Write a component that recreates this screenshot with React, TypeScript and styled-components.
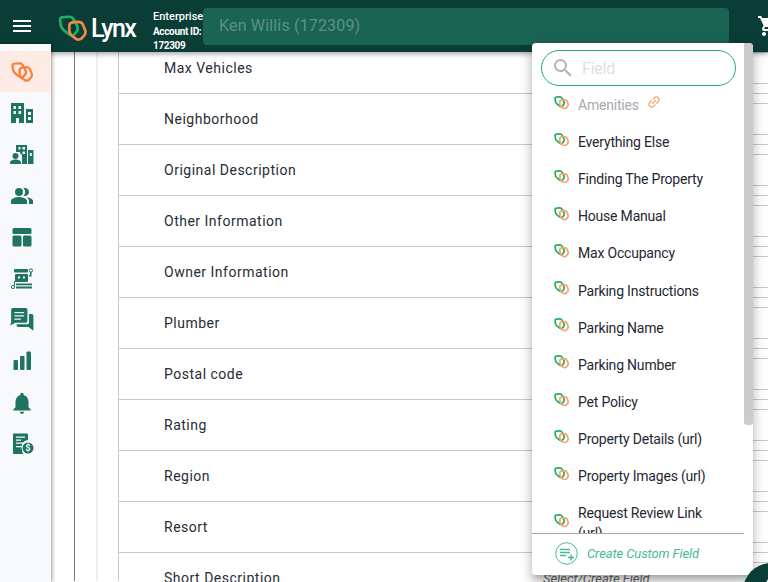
import React from "react";
import styled, { createGlobalStyle } from "styled-components";
import { MdMenu, MdSearch, MdShoppingCart, MdPeopleAlt, MdNotifications, MdLink } from "react-icons/md";

const Global = createGlobalStyle`
  html, body { margin: 0; padding: 0; background: #fff; }
  body { font-family: Roboto, "Liberation Sans", sans-serif; }
  * { box-sizing: border-box; }
`;

const Page = styled.div`
  position: relative;
  width: 768px;
  height: 582px;
  overflow: hidden;
  background: #fff;
`;

const Header = styled.header`
  position: relative;
  z-index: 1;
  height: 52px;
  background: #0b3d37;
  display: flex;
  align-items: center;
  box-shadow: 0 2px 5px rgba(0, 0, 0, 0.35);
  color: #fff;
`;

const MenuButton = styled.div`
  width: 44px;
  flex: none;
  padding-left: 10px;
  display: flex;
  align-items: center;
  color: #fff;
  margin-bottom: 1px;
`;

const Brand = styled.div`
  width: 95px;
  flex: none;
  margin-left: 14px;
  display: flex;
  align-items: center;
  gap: 4px;
  margin-top: 5px;
`;

const BrandName = styled.span`
  font-size: 25px;
  font-weight: 500;
  letter-spacing: -1.6px;
  color: #fff;
`;

const Account = styled.div`
  width: 50px;
  flex: none;
  font-size: 10px;
  font-weight: 700;
  line-height: 13px;
  white-space: nowrap;
  margin-top: 9px;
`;

const AccountPlan = styled.div`
  font-size: 11px;
  font-weight: 500;
  line-height: 16px;
`;

const AccountLine = styled.div`
  height: 14px;
  line-height: 14px;
  letter-spacing: -0.35px;
`;

const CustomerField = styled.div`
  position: relative;
  width: 526px;
  flex: none;
  height: 37px;
  border-radius: 4px;
  background: #1a6454;
  color: #5f9184;
  font-size: 16px;
  letter-spacing: 0.17px;
  display: flex;
  align-items: center;
  padding: 0 0 2px 16px;
`;

const CartButton = styled.div`
  flex: none;
  margin-left: 28px;
  display: flex;
`;

const Body = styled.div`
  display: flex;
  margin-top: -8px;
  height: 538px;
`;

const Sidebar = styled.nav`
  position: relative;
  z-index: 2;
  width: 51px;
  flex: none;
  padding-top: 7px;
  background: #f7f9fb;
  box-shadow: 1px 0 4px rgba(0, 0, 0, 0.4);
`;

const NavItem = styled.div<{ $active?: boolean }>`
  height: 41.4px;
  padding-right: 7px;
  display: flex;
  align-items: center;
  justify-content: center;
  color: #1f7361;
  background: ${(p) => (p.$active ? "#ffebe6" : "transparent")};
`;

const Main = styled.main`
  flex: 1;
  min-width: 0;
  overflow: hidden;
  padding-left: 23px;
`;

const OuterRail = styled.div`
  height: 100%;
  border-left: 1px solid #777;
  padding-left: 21px;
`;

const InnerRail = styled.div`
  height: 100%;
  border-left: 2px solid #eeeeee;
  padding-left: 20px;
`;

const RowList = styled.div`
  height: 100%;
  margin-top: -1.5px;
  border-left: 1px solid #c8c8c8;
`;

const Row = styled.div`
  height: 51.1px;
  display: flex;
  align-items: stretch;
  border-bottom: 1px solid #c8c8c8;
  white-space: nowrap;
`;

const RowLabel = styled.div`
  width: 424px;
  flex: none;
  padding: 16px 0 0 45px;
  font-size: 14px;
  line-height: 18px;
  letter-spacing: 0.5px;
  color: #262c36;
`;

const RowValue = styled.div`
  flex: 1;
  padding-top: 17px;
  font-size: 13px;
  line-height: 18px;
  font-style: italic;
  color: #666;
`;

const RowInputs = styled.div`
  width: 30px;
  margin: 9px 0;
  border-top: 1px solid #c8c8c8;
  border-bottom: 1px solid #c8c8c8;
  margin-left: auto;
`;

const Dropdown = styled.div`
  position: absolute;
  z-index: 3;
  left: 532px;
  top: 43px;
  width: 221px;
  height: 532px;
  display: flex;
  background: #fff;
  border-radius: 4px;
  overflow: hidden;
  box-shadow: 0 5px 5px -3px rgba(0, 0, 0, 0.2), 0 8px 10px 1px rgba(0, 0, 0, 0.14),
    0 3px 14px 2px rgba(0, 0, 0, 0.12);
`;

const DropdownBody = styled.div`
  flex: 1;
  min-width: 0;
  display: flex;
  flex-direction: column;
`;

const ScrollTrack = styled.div`
  width: 9px;
  flex: none;
`;

const ScrollThumb = styled.div`
  height: 382px;
  background: #cccccc;
  border-radius: 0 0 3px 3px;
`;

const SearchWrap = styled.div`
  flex: none;
  height: 49px;
  padding: 7px 9px 6px 9px;
`;

const SearchBox = styled.div`
  width: 195px;
  height: 36px;
  border: 1px solid #1fae72;
  border-radius: 18px;
  display: flex;
  align-items: center;
  padding-left: 9px;
  color: #b3b3b8;
`;

const SearchHint = styled.span`
  margin-left: 7px;
  font-size: 16px;
  letter-spacing: -0.2px;
  color: #dedede;
`;

const FieldList = styled.div`
  flex: 1;
  min-height: 0;
  overflow: hidden;
`;

const FieldItem = styled.div<{ $muted?: boolean }>`
  display: flex;
  align-items: center;
  min-height: 37.1px;
  padding: 8.55px 30px 8.55px 22px;
  font-size: 14px;
  line-height: 20px;
  letter-spacing: -0.2px;
  color: ${(p) => (p.$muted ? "#a5a9b1" : "#1f2733")};
  &:first-child {
    margin-top: -6.5px;
    margin-bottom: -1px;
  }
`;

const FieldIcon = styled.span`
  flex: none;
  width: 24px;
  display: flex;
  margin-bottom: 5px;
`;

const LinkedIcon = styled.span`
  display: inline-flex;
  margin-left: 7px;
  margin-bottom: 6px;
  color: #f9a26c;
`;

const DropdownFooter = styled.div`
  flex: none;
  height: 42px;
  border-top: 1px solid #a8a8a8;
  display: flex;
  align-items: center;
  padding: 0 0 2px 23px;
  gap: 9px;
  font-size: 13px;
  letter-spacing: -0.1px;
  font-style: italic;
  color: #45bb90;
`;

const ChatFab = styled.div`
  position: absolute;
  z-index: 4;
  left: 743px;
  top: 563px;
  width: 56px;
  height: 56px;
  border-radius: 50%;
  background: #0b3d37;
  display: flex;
  padding: 12px 0 0 22px;
`;

const LinkLogo = ({ size, a, b, w = 2.4 }: { size: number; a: string; b: string; w?: number }) => (
  <svg width={size} height={size * 0.9} viewBox="0 0 28 25" fill="none" strokeWidth={w} strokeLinejoin="round">
    <path d="M2 5.5 Q1.5 2 5 2 L10.5 1.6 Q13.6 1.5 15 4 L18.6 10.5 Q20 14 17.6 16.5 L15.5 18.7 Q13 20.5 10.5 18.5 L5.5 14.5 Q3 12.5 2.6 9.5 Z" stroke={a} />
    <path d="M11 9.5 Q11.5 7.5 14 7 L19.5 6.5 Q22.5 6.4 24 9 L26.4 15 Q27 18 25 20 L22.5 22.8 Q20 24.4 17.5 23 L13.5 20 Q11.4 18.4 11 15.5 Z" stroke={b} />
  </svg>
);

const Buildings = () => (
  <svg width="24" height="24" viewBox="0 0 24 24" fill="currentColor">
    <path fillRule="evenodd" d="M1 2h13v20H9v-5H6v5H1zM3.5 5v3h2.4V5zm5 0v3h2.6V5zM3.5 10v3h2.4v-3zm5 0v3h2.6v-3zM16 8h7v14h-7zm2 3v3h3v-3zm0 5v3h3v-3z" />
  </svg>
);

const BuildingPerson = () => (
  <svg width="24" height="24" viewBox="0 0 24 24" fill="currentColor">
    <path fillRule="evenodd" d="M6 3h11v19h-5v-8a3 3 0 0 0-2-2.8V10H6zM8.500 5v2.500h2V5zm4 0v2.500h2.500V5zm0 4.500V12h2.500V9.500zM18 8h5.500v14H18zm1.800 3v3h2v-3z" />
    <circle cx="5.500" cy="14" r="3" />
    <path d="M0 22v-1.500c0-2 3-3 5.500-3s5.500 1 5.500 3V22z" />
  </svg>
);

const Layout = () => (
  <svg width="24" height="24" viewBox="0 0 24 24" fill="currentColor">
    <rect x="2.500" y="3" width="19" height="6" rx="1.500" />
    <rect x="2.500" y="10.500" width="9" height="11" rx="1.500" />
    <rect x="13" y="10.500" width="8.500" height="11" rx="1.500" />
  </svg>
);

const Robot = () => (
  <svg width="24" height="24" viewBox="0 0 24 24" fill="currentColor">
    <rect x="4" y="2" width="14" height="3.500" rx="0.800" />
    <path fillRule="evenodd" d="M6 7h11a1 1 0 0 1 1 1v6a1 1 0 0 1-1 1H6a1 1 0 0 1-1-1V8a1 1 0 0 1 1-1zm2 2.500v2h2v-2zm5 0v2h2v-2z" />
    <rect x="6" y="16.500" width="16" height="1.800" />
    <rect x="6" y="19.500" width="16" height="2" />
    <path d="M20 5h1.500v4.500H19V8h1zM4 14h1v4.500H4z" />
    <circle cx="21" cy="3.500" r="1.600" fill="none" stroke="currentColor" strokeWidth="1" />
    <circle cx="3" cy="20" r="1.600" fill="none" stroke="currentColor" strokeWidth="1" />
  </svg>
);

const Chat = () => (
  <svg width="26" height="26" viewBox="0 0 24 24" fill="currentColor">
    <path fillRule="evenodd" d="M2 2.500A1.500 1.500 0 0 1 3.500 1h12A1.500 1.500 0 0 1 17 2.500V13a1.500 1.500 0 0 1-1.500 1.500H6L1 17l1-3zM5 4.500v1.200h9V4.500zm0 3v1.200h9V7.500zm0 3v1.200h6v-1.200z" />
    <path d="M18.500 6.500H21A1.500 1.500 0 0 1 22.500 8v14L18 18.500H8.500A1.500 1.500 0 0 1 7 17v-1h9.500a2 2 0 0 0 2-2z" />
  </svg>
);

const Bars = () => (
  <svg width="24" height="24" viewBox="0 0 24 24" fill="currentColor">
    <rect x="3.500" y="11" width="4.500" height="10" rx="1" />
    <rect x="10" y="7" width="4.500" height="14" rx="1" />
    <rect x="16.500" y="2.500" width="4.500" height="18.500" rx="1" />
  </svg>
);

const Invoice = () => (
  <svg width="24" height="24" viewBox="0 0 24 24" fill="currentColor">
    <path fillRule="evenodd" d="M3 2.500A1 1 0 0 1 4 1.500h13a1 1 0 0 1 1 1V8a7 7 0 0 0-5 2.500H6v1.300h6.200A7 7 0 0 0 12 18a7 7 0 0 0 1.200 4H4a1 1 0 0 1-1-1zM6 4.500v1.300h9V4.500zm0 3v1.300h5V7.500zm0 6.500v1.300h5.500V14z" />
    <circle cx="18" cy="16" r="5.500" />
    <text x="18" y="19" fontSize="8.500" fontWeight="700" fontFamily="Roboto" fill="#f7f9fb" textAnchor="middle">$</text>
  </svg>
);

const CreateFieldIcon = () => (
  <svg width="23" height="23" viewBox="0 0 23 23" fill="none" stroke="#45bb90">
    <circle cx="11.500" cy="11.500" r="10.800" strokeWidth="1" />
    <path d="M5 7.500h10M5 10.500h10M5 13.500h6M13 15.500h6M16 12.500v6" strokeWidth="1.500" />
  </svg>
);

const rows = [
  "Max Vehicles",
  "Neighborhood",
  "Original Description",
  "Other Information",
  "Owner Information",
  "Plumber",
  "Postal code",
  "Rating",
  "Region",
  "Resort",
  "Short Description",
];

const fields = [
  "Amenities",
  "Everything Else",
  "Finding The Property",
  "House Manual",
  "Max Occupancy",
  "Parking Instructions",
  "Parking Name",
  "Parking Number",
  "Pet Policy",
  "Property Details (url)",
  "Property Images (url)",
  "Request Review Link (url)",
];

const navIcons = [
  <LinkLogo key="l" size={22} a="#fb8038" b="#fb8038" w={3} />,
  <Buildings key="b" />,
  <BuildingPerson key="p" />,
  <MdPeopleAlt key="u" size={24} />,
  <Layout key="t" />,
  <Robot key="r" />,
  <Chat key="c" />,
  <Bars key="s" />,
  <MdNotifications key="n" size={26} />,
  <Invoice key="i" />,
];

export default function App() {
  return (
    <Page>
      <Global />
      <Header>
        <MenuButton>
          <MdMenu size={24} />
        </MenuButton>
        <Brand>
          <LinkLogo size={29} a="#1fae68" b="#f0894b" w={2.6} />
          <BrandName>Lynx</BrandName>
        </Brand>
        <Account>
          <AccountPlan>Enterprise</AccountPlan>
          <AccountLine>Account ID:</AccountLine>
          <AccountLine>172309</AccountLine>
        </Account>
        <CustomerField>Ken Willis (172309)</CustomerField>
        <CartButton>
          <MdShoppingCart size={24} />
        </CartButton>
      </Header>
      <Body>
        <Sidebar>
          {navIcons.map((icon, i) => (
            <NavItem key={i} $active={i === 0}>
              {icon}
            </NavItem>
          ))}
        </Sidebar>
        <Main>
          <OuterRail>
            <InnerRail>
              <RowList>
                {rows.map((r, i) => (
                  <Row key={r}>
                    <RowLabel>{r}</RowLabel>
                    {i === rows.length - 1 && <RowValue>Select/Create Field</RowValue>}
                    <RowInputs />
                  </Row>
                ))}
              </RowList>
            </InnerRail>
          </OuterRail>
        </Main>
      </Body>
      <Dropdown>
        <DropdownBody>
          <SearchWrap>
            <SearchBox>
              <MdSearch size={24} />
              <SearchHint>Field</SearchHint>
            </SearchBox>
          </SearchWrap>
          <FieldList>
            {fields.map((f, i) => (
              <FieldItem key={f} $muted={i === 0}>
                <FieldIcon>
                  <LinkLogo size={15} a="#1fae68" b="#f9a26c" w={3.2} />
                </FieldIcon>
                <span>{f}</span>
                {i === 0 && (
                  <LinkedIcon>
                    <MdLink size={16} style={{ transform: "rotate(-45deg)" }} />
                  </LinkedIcon>
                )}
              </FieldItem>
            ))}
          </FieldList>
          <DropdownFooter>
            <CreateFieldIcon />
            Create Custom Field
          </DropdownFooter>
        </DropdownBody>
        <ScrollTrack>
          <ScrollThumb />
        </ScrollTrack>
      </Dropdown>
      <ChatFab>
        <svg width="20" height="20" viewBox="0 0 20 20" fill="none" stroke="#fff" strokeWidth="2">
          <circle cx="10" cy="10" r="8" />
        </svg>
      </ChatFab>
    </Page>
  );
}
